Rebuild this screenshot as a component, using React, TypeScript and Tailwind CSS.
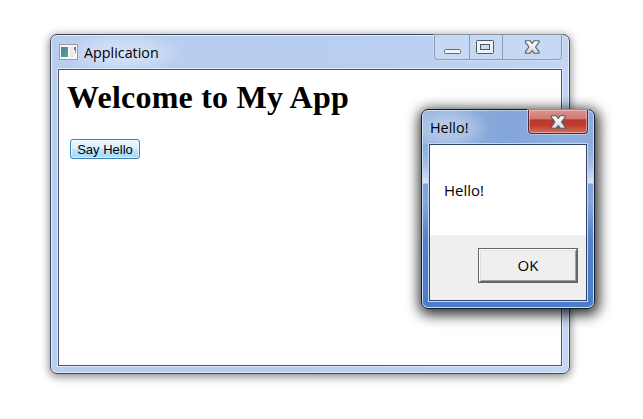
import React from "react";

const uiFont = "font-['Open_Sans','Noto_Sans',sans-serif]";

function CloseGlyph() {
  return (
    <svg width="17" height="15" viewBox="0 0 17 15" className="block shrink-0">
      <defs>
        <linearGradient id="closeFill" x1="0" y1="0" x2="0" y2="1">
          <stop offset="0" stopColor="#ffffff" />
          <stop offset="1" stopColor="#d8d8da" />
        </linearGradient>
      </defs>
      <path
        d="M1.5 0.7H6.1L8.2 3.5L10.3 0.7H15V2.4L11.5 7L15 11.6V13.3H10.3L8.2 10.5L6.1 13.3H1.5V11.6L5 7L1.5 2.4Z"
        fill="url(#closeFill)"
        stroke="#535b6c"
        strokeWidth="1.1"
        strokeLinejoin="round"
      />
    </svg>
  );
}

function AppIcon() {
  return (
    <svg width="20" height="17" viewBox="0 0 20 17" className="block shrink-0">
      <defs>
        <linearGradient id="pane" x1="0" y1="0" x2="1" y2="1">
          <stop offset="0" stopColor="#4b7fae" />
          <stop offset="1" stopColor="#55a676" />
        </linearGradient>
      </defs>
      <rect x="0.5" y="0.5" width="18" height="15" fill="#f8f8f8" stroke="#999c9f" />
      <rect x="2" y="3" width="7" height="10" fill="url(#pane)" />
      <path d="M11 4h3M11 6.5h3M11 9.5h5M11 12h4" stroke="#dcdcdc" strokeWidth="1.4" />
      <rect x="15" y="3" width="2" height="3" fill="#4a79a8" />
      <rect x="16" y="6" width="1" height="3" fill="#57ad78" />
    </svg>
  );
}

function CaptionButtons() {
  return (
    <div className="mr-[7px] flex h-[25px] w-[128px] rounded-b-[4px] border border-t-0 border-[#8c9ab4] bg-[#c5d8f4] shadow-[0_0_0_1px_rgba(226,237,252,.45)]">
      <div className="w-[35px] border-r border-[#8c9ab4] pl-[9px] pt-[13px]">
        <svg width="18" height="7" viewBox="0 0 18 7" className="block">
          <rect x="0.5" y="1.5" width="16" height="4" rx="1" fill="#f2f2f2" stroke="#626b7d" />
        </svg>
      </div>
      <div className="w-[33px] border-r border-[#8c9ab4] pl-[6px] pt-[5px]">
        <svg width="19" height="15" viewBox="0 0 19 15" className="block">
          <rect x="0.5" y="0.5" width="17" height="13" rx="1" fill="#f2f2f2" stroke="#4f586b" />
          <rect x="4.5" y="4.5" width="9" height="5" fill="#c7d9f4" stroke="#4f586b" />
        </svg>
      </div>
      <div className="flex-1 pl-[21px] pt-[5px]">
        <CloseGlyph />
      </div>
    </div>
  );
}

function MainWindow() {
  return (
    <div className="flex h-[340px] w-[520px] flex-col rounded-[7px] border border-[#3f4858] bg-[linear-gradient(100deg,#b9cdef_0%,#b8cef1_40%,#b9cef1_60%,#c5d7f3_100%)] shadow-[inset_0_0_0_1px_#dfeafa,0_2px_8px_1px_rgba(0,0,0,.45)]">
      <div className="flex h-[34px] shrink-0 justify-between">
        <div className="flex bg-[radial-gradient(ellipse_62px_22px_at_71px_18px,rgba(255,255,255,.38)_0%,rgba(255,255,255,.28)_50%,transparent_100%)] pl-[8px] pr-[20px] pt-[9px]">
          <AppIcon />
          <span className={`${uiFont} -mt-[1px] ml-[5px] h-[18px] origin-left scale-x-[.954] text-[15px] leading-[19px] text-black`}>
            Application
          </span>
        </div>
        <CaptionButtons />
      </div>
      <div className="mx-[7px] h-[297px] border border-[#4d5869] bg-white shadow-[0_0_0_1px_#dce8fa]">
        <h1 className="ml-[8px] mt-[8px] h-[38px] whitespace-nowrap font-['Liberation_Serif',serif] text-[32px] font-bold leading-[38px] tracking-[0.22px] text-black">
          Welcome to My App
        </h1>
        <button className="ml-[11px] mt-[23px] flex h-[20px] w-[70px] items-center justify-center rounded-[3px] border border-[#3c7fb1] bg-[linear-gradient(#eaf6fd_0%,#d9f0fc_48%,#bee6fd_52%,#a7d9f5_100%)] font-['Liberation_Sans',sans-serif] text-[13px] leading-[18px] text-black shadow-[inset_0_0_0_1px_rgba(255,255,255,.6)]">
          <span className="mt-[2px] whitespace-nowrap">Say Hello</span>
        </button>
      </div>
    </div>
  );
}

function HelloDialog() {
  return (
    <div className="absolute left-[421px] top-[109px] flex h-[200px] w-[174px] flex-col rounded-[7px] border border-[#111b2b] bg-[linear-gradient(#8cabdc_0px,#8daddd_36px,#9fbae3_52px,#d9e5f7_73px,#7fa2d9_74px,#87a8dc_92px,#5380c8_130px,#4b7dca_200px)] shadow-[inset_0_0_0_1px_#c9dcf5,1px_3px_13px_3px_rgba(0,0,0,.82)]">
      <div className="flex h-[34px] shrink-0 justify-between rounded-t-[6px] bg-[radial-gradient(ellipse_42px_24px_at_27px_18px,rgba(255,255,255,.4)_0%,rgba(255,255,255,.25)_50%,transparent_100%),linear-gradient(100deg,rgba(255,255,255,.08)_0%,transparent_25%,rgba(96,141,210,.2)_50%,transparent_75%)]">
        <span className={`${uiFont} ml-[8px] mt-[7px] h-[18px] origin-left scale-x-[.96] text-[15px] leading-[20px] text-black`}>
          Hello!
        </span>
        <button className="mr-[6px] flex h-[24px] w-[60px] justify-center rounded-b-[4px] border border-t-0 border-[#552c3b] bg-[linear-gradient(#d99591_0%,#cf7770_40%,#b83a2e_42%,#bf3a2b_65%,#d1705e_100%)] pl-px pt-[5px] shadow-[inset_0_0_0_1px_rgba(255,210,205,.5),0_0_0_1px_rgba(205,222,246,.6)]">
          <CloseGlyph />
        </button>
      </div>
      <div className="mx-[7px] flex h-[157px] flex-col border border-[#304568] bg-white shadow-[0_0_0_1px_#c5d8f3]">
        <p className={`${uiFont} h-[90px] shrink-0 pl-[14px] pt-[35px] text-[15px] leading-[20px] text-black`}>
          Hello!
        </p>
        <div className="h-[65px] bg-[#efefef] pl-[48px] pt-[13px]">
          <div className="h-[35px] w-[100px] border border-[#646464]">
            <button className={`${uiFont} flex h-[33px] w-[98px] items-center justify-center border-y border-l border-r border-b-[#686868] border-l-white border-r-[#686868] border-t-white bg-[#efefef] pb-[2px] text-[15px] leading-[20px] text-black shadow-[inset_1px_1px_0_#e0e0e0,inset_-1px_-1px_0_#a0a0a0]`}>
              OK
            </button>
          </div>
        </div>
      </div>
    </div>
  );
}

export default function App() {
  return (
    <div className="relative h-[419px] w-[643px] overflow-hidden bg-white pl-[50px] pt-[34px]">
      <MainWindow />
      <HelloDialog />
    </div>
  );
}
